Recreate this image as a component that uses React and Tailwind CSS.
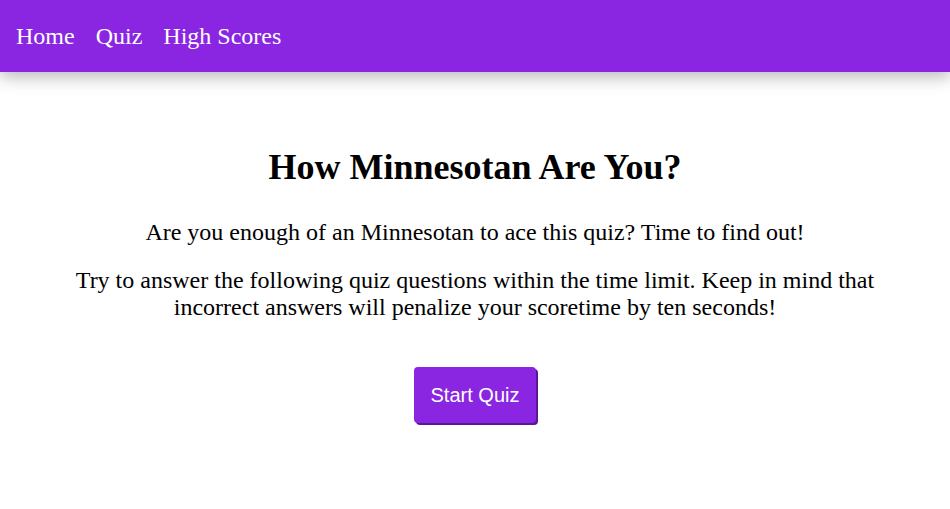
export default function App() {
  return (
    <div className="min-h-screen bg-white" style={{ fontFamily: '"Liberation Serif", "Times New Roman", serif' }}>
      {/* Navbar */}
      <nav className="relative h-[72px] bg-[#8a25e2] flex items-center px-4 gap-[21px] shadow-[0_5px_16px_rgba(0,0,0,0.28)]">
        <a className="text-white text-[24px]">Home</a>
        <a className="text-white text-[24px]">Quiz</a>
        <a className="text-white text-[24px]">High Scores</a>
      </nav>

      <main className="flex flex-col items-center text-center px-4 pt-[75px]">
        <h1 className="text-[36px] font-bold leading-[41px] text-black">How Minnesotan Are You?</h1>
        <p className="text-[24px] leading-[27px] mt-[31px] text-black">
          Are you enough of an Minnesotan to ace this quiz? Time to find out!
        </p>
        <p className="text-[24px] leading-[27px] mt-[21px] max-w-[840px] text-black">
          Try to answer the following quiz questions within the time limit. Keep in mind that incorrect answers will penalize your scoretime by ten seconds!
        </p>
        <button
          className="mt-[46px] w-[122px] h-[56px] bg-[#8a25e2] text-white text-[20px] rounded-[4px] shadow-[2px_2px_0_#5a1896]"
          style={{ fontFamily: '"Liberation Sans", Arial, sans-serif' }}
        >
          Start Quiz
        </button>
      </main>
    </div>
  )
}
